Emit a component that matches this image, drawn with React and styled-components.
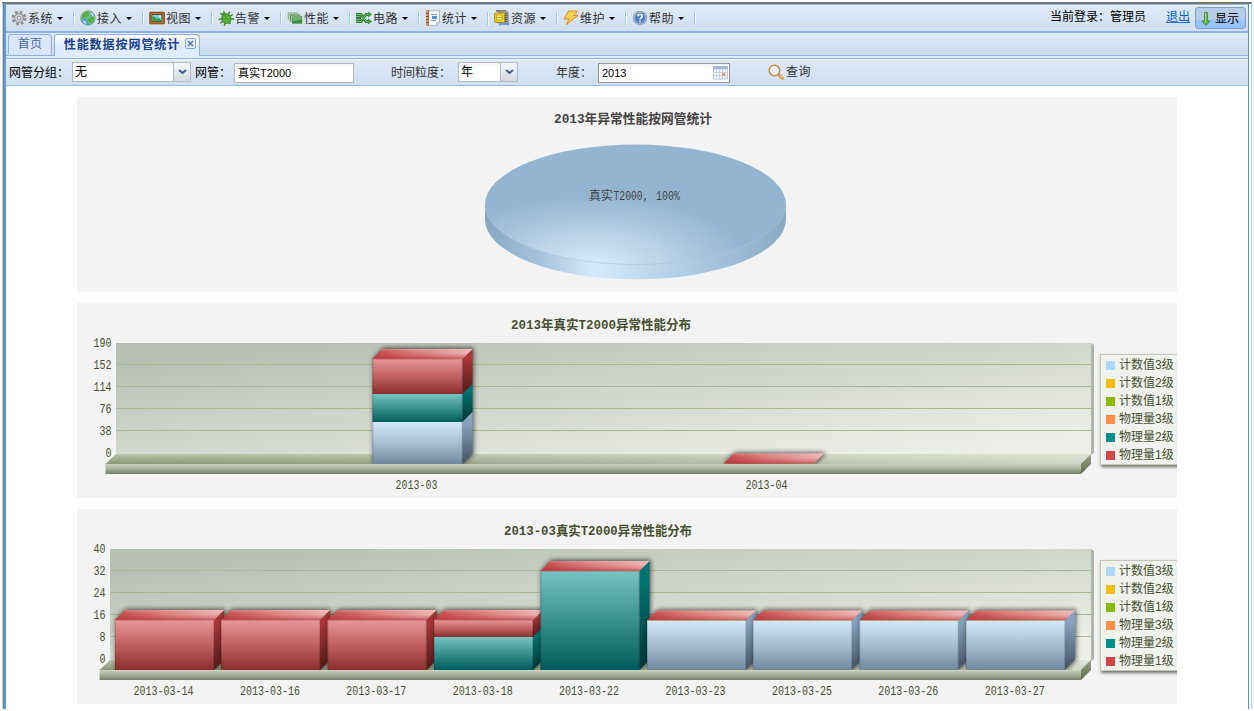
import React from "react";
import styled, { createGlobalStyle } from "styled-components";

const sans = `"Liberation Sans", "Noto Sans CJK SC", sans-serif`;
const mono = `"Liberation Mono", "Noto Sans CJK SC", monospace`;

const GlobalStyle = createGlobalStyle`
  * { box-sizing: border-box; }
  body { margin: 0; background: #fff; font: 12px/14px ${sans}; color: #000; overflow: hidden; }
  svg { display: block; flex: none; }
`;

const Page = styled.div`
  height: 711px;
  padding: 2px 2px 2px 2px;
`;
const Outer = styled.div`
  display: flex;
  flex-direction: column;
  width: 1250px;
  height: 707px;
  border-left: 1px solid #b3cfee;
  border-right: 1px solid #b3cfee;
  border-top: 2px solid #75767a;
  padding-right: 2px;
`;
const Frame = styled.div`
  flex: 1;
  display: flex;
  flex-direction: column;
  border-left: 1px solid #857f7d;
  border-right: 1px solid #4d90cc;
`;
const Body = styled.div`
  flex: 1;
  display: flex;
  flex-direction: column;
  border-left: 2px solid #5e9cd6;
  border-top: 1px solid #8db2e3;
`;
const Toolbar = styled.header`
  display: flex;
  height: 28px;
  border-bottom: 2px solid #8db2e3;
  background: linear-gradient(#dfe9f5, #d0def0);
  box-shadow: inset 0 1px #eaf4ff;
`;
const MenuItem = styled.button`
  display: flex;
  align-items: center;
  width: 69px;
  height: 26px;
  padding: 0 0 0 5px;
  border: 0;
  background: none;
  font: 12px/14px ${sans};
  color: #333;
`;
const MenuText = styled.span`
  width: 25px;
  margin-left: 1px;
  padding-top: 1px;
  letter-spacing: 0.4px;
  white-space: nowrap;
`;
const Caret = styled.i`
  border: 3px solid transparent;
  border-top-color: #000;
  border-bottom: 0;
  margin: 1px 0 0 4px;
`;
const Separator = styled.i`
  width: 2px;
  height: 13px;
  margin-left: auto;
  background: linear-gradient(90deg, #98c8ff 50%, #fff 50%);
`;
const Account = styled.div`
  display: flex;
  margin-left: auto;
  padding-right: 2px;
`;
const User = styled.span`
  padding-top: 5px;
`;
const Logout = styled.a`
  padding-top: 5px;
  margin: 0 5px 0 20px;
  color: #06c;
  text-decoration: underline;
`;
const ShowButton = styled.button`
  display: flex;
  align-items: center;
  gap: 3px;
  width: 51px;
  height: 22px;
  margin-top: 2px;
  padding: 1px 0 0 4px;
  border: 1px solid #7d9fcb;
  border-radius: 3px;
  background: linear-gradient(#b5cce9 0 12px, #97c3fb 12px);
  font: 12px/14px ${sans};
  white-space: nowrap;
`;
const TabStrip = styled.nav`
  display: flex;
  align-items: flex-end;
  gap: 2px;
  height: 23px;
  padding-left: 2px;
  border-bottom: 1px solid #8db2e3;
  background: linear-gradient(#dfe8f5, #cbdbef);
`;
const Tab = styled.div`
  display: flex;
  justify-content: center;
  width: ${(p) => (p.$active ? 146 : 44)}px;
  height: ${(p) => (p.$active ? 22 : 21)}px;
  padding-top: ${(p) => (p.$active ? 3 : 2)}px;
  margin-bottom: ${(p) => (p.$active ? -1 : 0)}px;
  padding-left: ${(p) => (p.$active ? 6 : 0)}px;
  border: 1px solid #8db2e3;
  border-bottom: ${(p) => (p.$active ? 0 : "1px solid #d3e2f5")};
  border-radius: 4px 4px 0 0;
  background: ${(p) => (p.$active ? "linear-gradient(#fff, #deecfd 60%)" : "linear-gradient(#d9e7fa, #d8e6f8)")};
  color: ${(p) => (p.$active ? "#15428b" : "#416aa3")};
  font-weight: ${(p) => (p.$active ? 700 : 400)};
  white-space: nowrap;
`;
const TabTitle = styled.span`
  letter-spacing: ${(p) => (p.$spread ? "0.95px" : "0.3px")};
`;
const TabClose = styled.i`
  display: flex;
  align-items: center;
  justify-content: center;
  width: 11px;
  height: 11px;
  margin: 0 0 0 5px;
  border: 1px solid #7fa8db;
  border-radius: 2px;
  background: #e7f0fb;
`;
const TabSpacer = styled.div`
  height: 3px;
  background: #deecfd;
  border-bottom: 1px solid #8db2e3;
`;
const Filters = styled.form`
  display: flex;
  align-items: center;
  height: 27px;
  padding-left: 3px;
  border-bottom: 1px solid #99bbe8;
  background: linear-gradient(#dfe9f5, #d0def0);
  box-shadow: inset 0 1px #eff6ff;
  white-space: nowrap;
`;
const Label = styled.label`
  width: ${(p) => p.$w}px;
  margin-left: ${(p) => p.$ml || 0}px;
  padding-top: 1px;
  color: ${(p) => (p.$soft ? "#333" : "#000")};
`;
const Field = styled.div`
  display: flex;
  align-items: center;
  width: ${(p) => p.$w}px;
  height: 20px;
  margin-top: ${(p) => (p.$low ? 1 : 0)}px;
  padding-left: ${(p) => (p.$small ? 3 : 2)}px;
  border: 1px solid ${(p) => (p.$dark ? "#999" : "#b5b8c8")};
  background: linear-gradient(#f2f4f4, #fff 5px);
  font-size: ${(p) => (p.$small ? 11 : 12)}px;
`;
const Trigger = styled.i`
  display: flex;
  align-items: center;
  justify-content: center;
  width: 17px;
  height: 18px;
  margin-left: auto;
  border-left: 1px solid #b5b8c8;
  background: linear-gradient(#f5f7fa, #d5dae1);
`;
const CalendarSlot = styled.i`
  margin: 0 1px 0 auto;
`;
const Query = styled.button`
  display: flex;
  align-items: center;
  gap: 2px;
  margin-left: 38px;
  padding: 0;
  border: 0;
  background: none;
  font: 12px/14px ${sans};
  letter-spacing: 0.4px;
  color: #333;
`;
const Charts = styled.main`
  display: flex;
  flex-direction: column;
  gap: 11px;
  width: 1100px;
  margin: 11px 0 0 71px;
`;
const Panel = styled.section`
  display: flex;
  height: 195px;
  overflow: hidden;
  background: #f3f3f3;
`;
const Legend = styled.ul`
  flex: none;
  width: 90px;
  height: 111px;
  margin: 51px 0 0;
  padding: 1px 0 0 5px;
  list-style: none;
  border: 1px solid #c3cab6;
  background: #f0f2ed;
  box-shadow: 1px 2px 3px rgba(0, 0, 0, 0.55);
`;
const LegendItem = styled.li`
  display: flex;
  align-items: center;
  gap: 4px;
  height: 18px;
  color: #454f31;
  font: 12px/18px ${sans};
  white-space: nowrap;
`;
const Swatch = styled.i`
  width: 9px;
  height: 9px;
  background: ${(p) => p.$c};
`;
const Plot = styled.svg`
  font-family: ${mono};
  font-size: 12px;
  fill: #454f31;
`;

const icons = {
  gear: (
    <g>
      <circle cx="8" cy="8" r="6" fill="none" stroke="#8f8f8f" strokeWidth="2.800" strokeDasharray="2.700 2.010" />
      <circle cx="8" cy="8" r="4.400" fill="#d6d6d6" stroke="#979797" strokeWidth="1.300" />
      <circle cx="8" cy="8" r="1.900" fill="#e8eef6" stroke="#8a8a8a" />
    </g>
  ),
  globe: (
    <g>
      <circle cx="8" cy="8" r="7.200" fill="#5e9fd8" stroke="#6f9f88" />
      <path d="M3 3.500C5 1.500 9 1 10.500 2L9 4.500 10 6 7 7.500 5 7 3.500 9.500 1.500 8.500C1.200 6.500 2 4.500 3 3.500ZM9 8l3-2 2.500 1c.5 3-2 6.500-5 7L8 11.500 6.500 9.500Z" fill="#4fae3f" stroke="#8fd676" strokeWidth=".6" />
      <path d="M11 3l2.500 2.500M3.500 11L6 13.500" stroke="#d9f0ff" strokeWidth="1.200" />
    </g>
  ),
  picture: (
    <g>
      <rect x=".8" y="2.300" width="14.500" height="11.500" rx=".6" fill="#b9762d" stroke="#74420f" />
      <rect x="3" y="4.500" width="10" height="7" fill="#75cdf0" stroke="#5b3a12" strokeWidth=".8" />
      <path d="M3.500 6.500L6 7l2 2 2-1 2.500 3h-9Z" fill="#31a447" />
      <circle cx="11" cy="6.500" r="1.100" fill="#fff38e" />
    </g>
  ),
  bug: (
    <g transform="rotate(-35 8 8)">
      <path d="M1 5l4 1.500M.5 9H5M2 13.500L5 11M15 5l-4 1.500M15.500 9H11M14 13.500L11 11M6 1l1 3M10 1L9 4M8 12v3.500" stroke="#3b8626" strokeWidth="1.400" />
      <ellipse cx="8" cy="8.700" rx="4.400" ry="5" fill="#61b63f" stroke="#3b8626" />
      <circle cx="8" cy="4" r="2" fill="#489632" />
      <path d="M8 5v8M5 7.500h6M5 10.500h6" stroke="#3f8f2c" strokeWidth=".6" />
    </g>
  ),
  stack: (
    <g stroke="#dcebdc" strokeWidth=".6">
      <rect x=".3" y="2" width="11" height="8" fill="#8fb396" />
      <rect x="2.500" y="4" width="11" height="8" fill="#5d9064" />
      <rect x="4.700" y="6" width="11" height="8" fill="#3b8c43" />
      <path d="M5.500 7h9.500v2.500l-9.500 2Z" fill="#6fae70" stroke="none" />
    </g>
  ),
  circuit: (
    <g fill="none">
      <path d="M0 4.500h5l5 7h4M0 11.500h5l5-7h4M0 8h5" stroke="#297e34" strokeWidth="2.800" />
      <path d="M0 4.500h5l5 7h4M0 11.500h5l5-7h4" stroke="#7bc565" strokeWidth="1" />
      <path d="M12 1.500l4 3-4 3ZM12 8.500l4 3-4 3Z" fill="#3b963c" />
    </g>
  ),
  notebook: (
    <g>
      <path d="M3 .7h11.500v12L12 15.300H3Z" fill="#f9fcff" stroke="#9ba7ba" strokeWidth=".8" />
      <path d="M1 .5h3v15H1Z" fill="#a9491b" />
      <path d="M.5 2h3M.5 5h3M.5 8h3M.5 11h3M.5 14h3" stroke="#f6ddc5" />
      <path d="M6 4.500h6M6 10.500h5" stroke="#7897cc" />
      <rect x="7" y="6" width="5" height="3" fill="#568ee0" />
      <path d="M11.500 15v-2.500h3" fill="#d8dfeb" stroke="#9ba7ba" strokeWidth=".6" />
    </g>
  ),
  archive: (
    <g>
      <path d="M2 .7h10l2 2v11H11V4Z" fill="#a8a49a" stroke="#696c6c" />
      <rect x=".6" y="3" width="10" height="9.500" rx="1" fill="#f2d42b" stroke="#a98a15" />
      <path d="M2.500 5h6v5h-6ZM2.500 7.500h6" fill="#fff16b" stroke="#c5a31b" strokeWidth=".9" />
      <path d="M12 3v9" stroke="#555e64" strokeDasharray="1 1" strokeWidth="2" />
      <path d="M6.500 14h7" stroke="#4f91da" strokeWidth="1.500" />
      <circle cx="6" cy="14" r="1.500" fill="#5e9fe8" />
      <circle cx="14" cy="14" r="1.500" fill="#5e9fe8" />
    </g>
  ),
  bolt: <path d="M5.500 1h9L10.500 5.500h4.500L3 15l3-6H1Z" fill="#ffce55" stroke="#dd9225" strokeLinejoin="round" />,
  help: (
    <g>
      <circle cx="8" cy="8" r="6.700" fill="#4f7fc0" stroke="#9ba9bd" strokeWidth="1.200" />
      <circle cx="8" cy="8" r="5.600" fill="none" stroke="#a9c7ec" strokeWidth=".8" />
      <path d="M5.900 6.300C6 3.800 10.300 3.800 10.200 6.300 10.200 7.800 8 7.800 8 9.500M8 10.700v1.500" fill="none" stroke="#fff" strokeWidth="1.600" />
    </g>
  ),
  search: (
    <g fill="none">
      <circle cx="6.500" cy="6.500" r="5.300" fill="#e8f1fb" stroke="#c08a45" strokeWidth="1.500" />
      <path d="M10.500 10.500l1.500 1.500" stroke="#a86f2c" strokeWidth="2" />
      <path d="M11.800 11.800l2.600 2.600" stroke="#d69f4c" strokeWidth="3.200" strokeLinecap="round" />
      <path d="M12 11.500l2.500 2.500" stroke="#ffe19d" strokeWidth="1" />
    </g>
  ),
};

const Icon = ({ name }) => (
  <svg width="16" height="16" viewBox="0 0 16 16">{icons[name]}</svg>
);

const menu = [
  ["gear", "系统"], ["globe", "接入"], ["picture", "视图"], ["bug", "告警"], ["stack", "性能"],
  ["circuit", "电路"], ["notebook", "统计"], ["archive", "资源"], ["bolt", "维护"], ["help", "帮助"],
];

const legend = [
  ["#afd8f8", "计数值3级"], ["#f6bd0f", "计数值2级"], ["#8bba00", "计数值1级"],
  ["#ff8e46", "物理量3级"], ["#008e8e", "物理量2级"], ["#d64646", "物理量1级"],
];

const Chevron = () => (
  <svg width="9" height="6" viewBox="0 0 9 6">
    <path d="M1 1l3.500 3L8 1" fill="none" stroke="#3b5a8f" strokeWidth="2" />
  </svg>
);

const shades = {
  red: { front: ["#e79696", "#c26060", "#8a2d2d"], side: ["#aa3737", "#4f1a1a"] },
  teal: { front: ["#76c4c4", "#38908f", "#005c5c"], side: ["#007272", "#003535"] },
  blue: { front: ["#d3e8fb", "#a9bdd3", "#71899f"], side: ["#87a3bf", "#445261"] },
};

const Text = ({ x, y, w, anchor = "middle", ...rest }) => (
  <text x={x} y={y} textAnchor={anchor} textLength={w} lengthAdjust="spacingAndGlyphs" {...rest} />
);

const DEPTH = 10;

function Bar({ id, x, w, top, base, parts }) {
  const d = DEPTH;
  let y = top;
  return (
    <g>
      <path
        d={`M${x + 1} ${top - 1}l${d} ${-d}h${w}V${base - d}l${-d} ${d}H${x + 1}Z`}
        fill="#000" opacity=".65" filter={`url(#${id}-shadow)`}
      />
      {parts.map(([color, h], i) => {
        const y0 = y;
        y += h;
        return (
          <g key={i}>
            <path d={`M${x + w} ${y0}l${d} ${-d}v${h}l${-d} ${d}Z`} fill={`url(#${id}-${color}-side)`} />
            <rect x={x} y={y0} width={w} height={h} fill={`url(#${id}-${color}-front)`} />
            <path d={`M${x + w - 0.5} ${y0}v${h}M${x + 0.5} ${y0}v${h}`} stroke="#000" opacity=".13" />
          </g>
        );
      })}
      <path d={`M${x} ${top}l${d} ${-d}h${w}l${-d} ${d}Z`} fill={`url(#${id}-cap)`} />
      <path d={`M${x} ${top}l${d} ${-d}h${w}l${-d} ${d}Z`} fill={`url(#${id}-capdepth)`} />
      {parts.length > 0 && (
        <path d={`M${x} ${top}h${w}`} stroke={parts[0][0] === "blue" ? "#b7b087" : "#b8605f"} strokeWidth=".8" />
      )}
    </g>
  );
}

function BarChart({ id, title, titleX, titleW, left, ticks, bars, barW, labels }) {
  const right = 1014;
  const top = 40;
  const floor = 151;
  const d = DEPTH;
  return (
    <Panel>
      <Plot width="1023" height="195" viewBox="0 0 1023 195">
        <defs>
          <linearGradient id={`${id}-wall`} gradientUnits="userSpaceOnUse" x1={left + 2} y1="60" x2={left + 21} y2="234">
            <stop offset="0" stopColor="#b8bfb3" />
            <stop offset="1" stopColor="#ecefe7" />
          </linearGradient>
          <linearGradient id={`${id}-light`} x2="1" y2="0">
            <stop offset="0" stopColor="#f0f3ea" stopOpacity="0" />
            <stop offset=".3" stopColor="#f0f3ea" stopOpacity=".1" />
            <stop offset="1" stopColor="#f0f3ea" stopOpacity=".7" />
          </linearGradient>
          <linearGradient id={`${id}-floor`} x2="0" y2="1">
            <stop offset="0" stopColor="#b9c3ad" /><stop offset="1" stopColor="#8a9778" />
          </linearGradient>
          <linearGradient id={`${id}-base`} x2="0" y2="1">
            <stop offset="0" stopColor="#cbd3bf" /><stop offset=".5" stopColor="#a5ae99" /><stop offset="1" stopColor="#757e67" />
          </linearGradient>
          <linearGradient id={`${id}-end`} x2="0" y2="1">
            <stop offset="0" stopColor="#98a389" /><stop offset="1" stopColor="#5f694f" />
          </linearGradient>
          <linearGradient id={`${id}-cap`}>
            <stop offset="0" stopColor="#c24747" /><stop offset=".4" stopColor="#db8080" /><stop offset="1" stopColor="#f5c6c6" />
          </linearGradient>
          <linearGradient id={`${id}-capdepth`} x2="0" y2="1">
            <stop offset="0" stopColor="#f5c6c6" stopOpacity=".35" /><stop offset=".4" stopColor="#c04040" stopOpacity=".1" /><stop offset="1" stopColor="#b02a2a" stopOpacity=".65" />
          </linearGradient>
          <filter id={`${id}-shadow`} x="-20%" y="-50%" width="140%" height="200%">
            <feGaussianBlur stdDeviation="2.5" />
          </filter>
          {Object.entries(shades).map(([name, s]) => (
            <React.Fragment key={name}>
              <linearGradient id={`${id}-${name}-front`} x2="0" y2="1">
                <stop offset="0" stopColor={s.front[0]} /><stop offset=".5" stopColor={s.front[1]} /><stop offset="1" stopColor={s.front[2]} />
              </linearGradient>
              <linearGradient id={`${id}-${name}-side`} x2="0" y2="1">
                <stop offset=".2" stopColor={s.side[0]} /><stop offset="1" stopColor={s.side[1]} />
              </linearGradient>
            </React.Fragment>
          ))}
          <clipPath id={`${id}-clip`}><path d="M0 0H1023V161H0Z" /></clipPath>
        </defs>
        <Text x={titleX} y="26" w={titleW} fontSize="13" fontWeight="700">{title}</Text>
        <path d={`M${right} ${top}l3 2v108l-3 2Z`} fill="#b0b6a8" />
        <rect x={left} y={top} width={right - left} height={floor - top} fill={`url(#${id}-wall)`} />
        {[61.5, 83.5, 105.5, 127.5].map((y) => (
          <path key={y} d={`M${left} ${y}H${right}`} stroke="#a9b995" />
        ))}
        <path d={`M${left} ${floor}H${right}l${-d} ${d}H${left - d - 0.5}Z`} fill={`url(#${id}-floor)`} />
        <path d={`M${left} ${floor}H${right}l${-d} ${d}H${left - d - 0.5}Z`} fill={`url(#${id}-light)`} />
        <rect x={left - d - 0.5} y={floor + d} width={right - left + 0.5} height={d} fill={`url(#${id}-base)`} />
        <path d={`M${right - d} ${floor + d}l${d} ${-d}v${d}l${-d} ${d}Z`} fill={`url(#${id}-end)`} />
        <g clipPath={`url(#${id}-clip)`}>
          {bars.map((b) => (
            <Bar key={b.x} id={id} x={b.x} w={barW} top={b.top} base={floor + d} parts={b.parts} />
          ))}
        </g>
        {ticks.map((t, i) => (
          <Text key={t} x={left - 4.5} y={[43.5, 66, 88, 110, 132, 154][i]} w={t.length * 6} anchor="end">{t}</Text>
        ))}
        {labels.map(([x, t]) => (
          <Text key={t} x={x} y="186" w={t.length * 6}>{t}</Text>
        ))}
      </Plot>
      <Legend>
        {legend.map(([c, t]) => (
          <LegendItem key={t}><Swatch $c={c} />{t}</LegendItem>
        ))}
      </Legend>
    </Panel>
  );
}

function PieChart() {
  return (
    <Panel>
      <Plot width="1100" height="195" viewBox="0 0 1100 195">
        <defs>
          <radialGradient id="pie-top" gradientUnits="userSpaceOnUse" cx="0" cy="0" r="1" gradientTransform="translate(516 168) scale(155 68)">
            <stop offset="0" stopColor="#d8ebfc" /><stop offset=".45" stopColor="#b9d3e9" /><stop offset="1" stopColor="#94b5d2" />
          </radialGradient>
          <linearGradient id="pie-side">
            <stop offset="0" stopColor="#86a8c6" /><stop offset=".2" stopColor="#a9c5df" /><stop offset=".36" stopColor="#d6eafb" />
            <stop offset=".7" stopColor="#abc9e1" /><stop offset="1" stopColor="#89a9c5" />
          </linearGradient>
        </defs>
        <Text x="556" y="26" w="158" fontSize="13" fontWeight="700" fill="#444">2013年异常性能按网管统计</Text>
        <path d="M408 107.500v15a150.500 60 0 0 0 301 0v-15Z" fill="url(#pie-side)" />
        <ellipse cx="558.500" cy="107.500" rx="150.500" ry="60" fill="url(#pie-top)" />
        <path d="M408 107.500a150.500 60 0 0 0 301 0" fill="none" stroke="#a9c6d6" strokeWidth=".6" />
        <Text x="512" y="103" w="24" anchor="start" fontSize="12" fill="#444">真实</Text>
        <Text x="536.500" y="103" w="35" anchor="start" fill="#444">T2000,</Text>
        <Text x="579" y="103" w="24" anchor="start" fill="#444">100%</Text>
      </Plot>
    </Panel>
  );
}

const year = [
  { x: 295.5, top: 56, parts: [["red", 35], ["teal", 28], ["blue", 42]] },
  { x: 647, top: 160.5, parts: [] },
];

const red = [["red", 50]];
const blue = [["blue", 49]];
const month = [
  { x: 38, top: 111, parts: red },
  { x: 144, top: 111, parts: red },
  { x: 250.5, top: 111, parts: red },
  { x: 357, top: 111, parts: [["red", 17], ["teal", 33]] },
  { x: 463.5, top: 62, parts: [["teal", 99]] },
  { x: 570, top: 111.5, parts: blue },
  { x: 676, top: 111.5, parts: blue },
  { x: 782.5, top: 111.5, parts: blue },
  { x: 889, top: 111.5, parts: blue },
];
const days = ["14", "16", "17", "18", "22", "23", "25", "26", "27"];

export default function App() {
  return (
    <Page lang="zh-CN">
      <GlobalStyle />
      <Outer>
        <Frame>
          <Body>
            <Toolbar>
              {menu.map(([icon, text]) => (
                <MenuItem key={text}>
                  <Icon name={icon} />
                  <MenuText>{text}</MenuText>
                  <Caret />
                  <Separator />
                </MenuItem>
              ))}
              <Account>
                <User>当前登录：管理员</User>
                <Logout>退出</Logout>
                <ShowButton>
                  <svg width="12" height="16" viewBox="0 0 12 16">
                    <path d="M4.500 1.500h3V10H10l-4 4.500L2 10h2.500Z" fill="#67b345" stroke="#388a2b" strokeWidth=".8" />
                    <path d="M5.500 2v9" stroke="#a8dd85" />
                  </svg>
                  显示
                </ShowButton>
              </Account>
            </Toolbar>
            <TabStrip>
              <Tab><TabTitle>首页</TabTitle></Tab>
              <Tab $active>
                <TabTitle $spread>性能数据按网管统计</TabTitle>
                <TabClose>
                  <svg width="7" height="7" viewBox="0 0 7 7"><path d="M1 1l5 5M6 1L1 6" stroke="#4d7fc0" strokeWidth="1.600" /></svg>
                </TabClose>
              </Tab>
            </TabStrip>
            <TabSpacer />
            <Filters>
              <Label $w={63}>网管分组：</Label>
              <Field $w={119}>无<Trigger><Chevron /></Trigger></Field>
              <Label $w={39} $ml={4}>网管：</Label>
              <Field $w={120} $small $low>真实T2000</Field>
              <Label $w={67} $ml={37} $soft>时间粒度：</Label>
              <Field $w={60}>年<Trigger><Chevron /></Trigger></Field>
              <Label $w={42} $ml={38} $soft>年度：</Label>
              <Field $w={132} $small $low $dark>
                2013
                <CalendarSlot>
                  <svg width="15" height="14" viewBox="0 0 15 14">
                    <rect x=".5" y=".5" width="14" height="12.500" fill="#fff" stroke="#b8c6dc" />
                    <path d="M.5 2h14" stroke="#9db8e0" strokeWidth="3" />
                    <path d="M1 6.500h13M1 9.500h13M3.500 4v9M6.500 4v9M9.500 4v9M12 4v9" stroke="#c3d1e6" />
                    <rect x="9" y="7" width="3" height="3" fill="#eb957c" />
                  </svg>
                </CalendarSlot>
              </Field>
              <Query type="button"><Icon name="search" />查询</Query>
            </Filters>
            <Charts>
              <PieChart />
              <BarChart
                id="year" title="2013年真实T2000异常性能分布" titleX={524} titleW={180} left={39}
                ticks={["190", "152", "114", "76", "38", "0"]} bars={year} barW={90}
                labels={[[339.5, "2013-03"], [689.5, "2013-04"]]}
              />
              <BarChart
                id="month" title="2013-03真实T2000异常性能分布" titleX={521} titleW={188} left={33}
                ticks={["40", "32", "24", "16", "8", "0"]} bars={month} barW={99}
                labels={days.map((d, i) => [86.5 + i * 106.4, `2013-03-${d}`])}
              />
            </Charts>
          </Body>
        </Frame>
      </Outer>
    </Page>
  );
}
